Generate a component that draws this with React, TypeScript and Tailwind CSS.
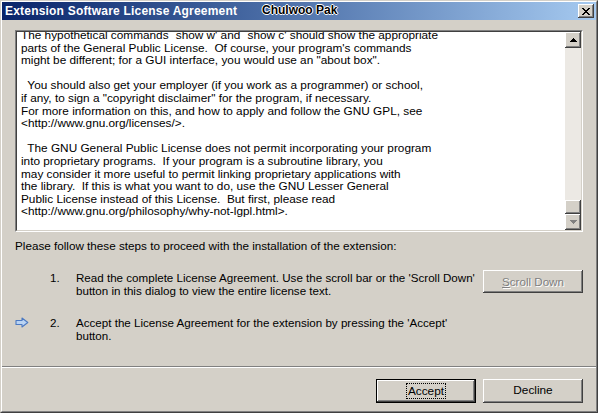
import React from "react";

const LICENSE = `The hypothetical commands \`show w' and \`show c' should show the appropriate
parts of the General Public License.  Of course, your program's commands
might be different; for a GUI interface, you would use an "about box".

  You should also get your employer (if you work as a programmer) or school,
if any, to sign a "copyright disclaimer" for the program, if necessary.
For more information on this, and how to apply and follow the GNU GPL, see
<http://www.gnu.org/licenses/>.

  The GNU General Public License does not permit incorporating your program
into proprietary programs.  If your program is a subroutine library, you
may consider it more useful to permit linking proprietary applications with
the library.  If this is what you want to do, use the GNU Lesser General
Public License instead of this License.  But first, please read
<http://www.gnu.org/philosophy/why-not-lgpl.html>.`;

function UpArrow({ color = "#000" }: { color?: string }) {
  return (
    <svg width="7" height="4" viewBox="0 0 7 4" shapeRendering="crispEdges">
      <path d="M3 0h1v1h1v1h1v1h1v1H0V3h1V2h1V1h1z" fill={color} />
    </svg>
  );
}

function DownArrow({ color = "#000" }: { color?: string }) {
  return (
    <svg width="7" height="4" viewBox="0 0 7 4" shapeRendering="crispEdges">
      <path d="M0 0h7v1H6v1H5v1H4v1H3V3H2V2H1V1H0z" fill={color} />
    </svg>
  );
}

function BlueArrow() {
  return (
    <svg width="14" height="11" viewBox="0 0 14 11">
      <path
        d="M1 3.5H7V1L12.8 5.5L7 10V7.5H1Z"
        fill="#b9d3f3"
        stroke="#4b79c2"
        strokeWidth="1.1"
        strokeLinejoin="round"
      />
    </svg>
  );
}

export default function App() {
  return (
    <div className="w-[598px] h-[413px] bg-[#d4d0c8] border border-t-[#d4d0c8] border-l-[#d4d0c8] border-r-[#404040] border-b-[#404040] font-['Liberation_Sans',Arial,sans-serif] text-[11.8px] text-black overflow-hidden">
      <div className="h-full border border-t-white border-l-white border-r-[#808080] border-b-[#808080] flex flex-col">
        {/* Title bar */}
        <div className="relative h-[18px] flex items-center bg-gradient-to-r from-[#0a246a] to-[#a6caf0] pl-[3px] pr-[2px]">
          <span className="text-white font-bold text-[12px] tracking-[0.2px] leading-none">
            Extension Software License Agreement
          </span>
          <span className="absolute left-[260px] top-[2px] text-black font-bold text-[12px] leading-[13px] [text-shadow:1px_0_#fff,-1px_0_#fff,0_1px_#fff,0_-1px_#fff]">
            Chulwoo Pak
          </span>
          <div className="ml-auto w-[16px] h-[14px] bg-[#d4d0c8] flex items-center justify-center shadow-[inset_-1px_-1px_0_#404040,inset_1px_1px_0_#ffffff,inset_-2px_-2px_0_#808080,inset_2px_2px_0_#d4d0c8]">
            <svg width="8" height="7" viewBox="0 0 8 7" shapeRendering="crispEdges">
              <path d="M0 0h2v1h1v1h2V1h1V0h2v1H7v1H6v1H5v1h1v1h1v1h1v1H6V6H5V5H3v1H2v1H0V6h1V5h1V4h1V3H2V2H1V1H0z" fill="#000" />
            </svg>
          </div>
        </div>

        {/* Content */}
        <div className="px-[13px] pt-[10px] flex flex-col">
          {/* License text area */}
          <div className="h-[202px] border border-t-[#808080] border-l-[#808080] border-r-white border-b-white">
            <div className="h-full border border-t-[#404040] border-l-[#404040] border-r-[#d4d0c8] border-b-[#d4d0c8] flex bg-white">
              <div className="flex-1 overflow-hidden pl-[4px]">
                <div className="mt-[-3px] whitespace-pre leading-[12.6px]">{LICENSE}</div>
              </div>
              <div className="w-[16px] h-full bg-[#ece9e4] flex flex-col">
                <div className="h-[16px] bg-[#d4d0c8] flex items-center justify-center shadow-[inset_-1px_-1px_0_#404040,inset_1px_1px_0_#ffffff,inset_-2px_-2px_0_#808080,inset_2px_2px_0_#d4d0c8]">
                  <UpArrow />
                </div>
                <div className="flex-1" />
                <div className="h-[14px] bg-[#d4d0c8] shadow-[inset_-1px_-1px_0_#404040,inset_1px_1px_0_#ffffff,inset_-2px_-2px_0_#808080,inset_2px_2px_0_#d4d0c8]" />
                <div className="h-[16px] bg-[#d4d0c8] flex items-center justify-center shadow-[inset_-1px_-1px_0_#404040,inset_1px_1px_0_#ffffff,inset_-2px_-2px_0_#808080,inset_2px_2px_0_#d4d0c8]">
                  <DownArrow color="#808080" />
                </div>
              </div>
            </div>
          </div>

          <div className="mt-[7px] leading-[13px] text-[11.7px]">
            Please follow these steps to proceed with the installation of the extension:
          </div>

          {/* Step 1 */}
          <div className="mt-[18px] flex items-start text-[11.6px]">
            <div className="w-[35px]" />
            <div className="w-[26px] leading-[13px] pt-[1px]">1.</div>
            <div className="flex-1 leading-[13px] pt-[1px]">
              Read the complete License Agreement. Use the scroll bar or the 'Scroll Down'
              <br />
              button in this dialog to view the entire license text.
            </div>
            <div className="w-[100px] h-[23px] bg-[#d4d0c8] flex items-center justify-center shadow-[inset_-1px_-1px_0_#404040,inset_1px_1px_0_#ffffff,inset_-2px_-2px_0_#808080,inset_2px_2px_0_#d4d0c8]">
              <span className="text-[#808080] [text-shadow:1px_1px_0_#ffffff]">
                <span className="underline">S</span>croll Down
              </span>
            </div>
          </div>

          {/* Step 2 */}
          <div className="mt-[19px] flex items-start h-[26px] text-[11.6px]">
            <div className="w-[35px] pt-[1px]">
              <BlueArrow />
            </div>
            <div className="w-[26px] leading-[13px]">2.</div>
            <div className="flex-1 leading-[13px]">
              Accept the License Agreement for the extension by pressing the 'Accept'
              <br />
              button.
            </div>
          </div>
        </div>

        {/* Separator */}
        <div className="mt-[24px] h-[2px] border-t border-t-[#808080] border-b border-b-white" />

        {/* Buttons */}
        <div className="mt-[11px] flex justify-end gap-[7px] pr-[13px]">
          <div className="w-[100px] h-[24px] border border-black">
            <div className="w-full h-full bg-[#d4d0c8] flex items-center justify-center shadow-[inset_-1px_-1px_0_#404040,inset_1px_1px_0_#ffffff,inset_-2px_-2px_0_#808080,inset_2px_2px_0_#d4d0c8]">
              <span className="outline outline-1 outline-dotted outline-black px-[1px] leading-[14px]">Accept</span>
            </div>
          </div>
          <div className="w-[100px] h-[24px] bg-[#d4d0c8] flex items-center justify-center shadow-[inset_-1px_-1px_0_#404040,inset_1px_1px_0_#ffffff,inset_-2px_-2px_0_#808080,inset_2px_2px_0_#d4d0c8]">
            <span>Decline</span>
          </div>
        </div>
      </div>
    </div>
  );
}
